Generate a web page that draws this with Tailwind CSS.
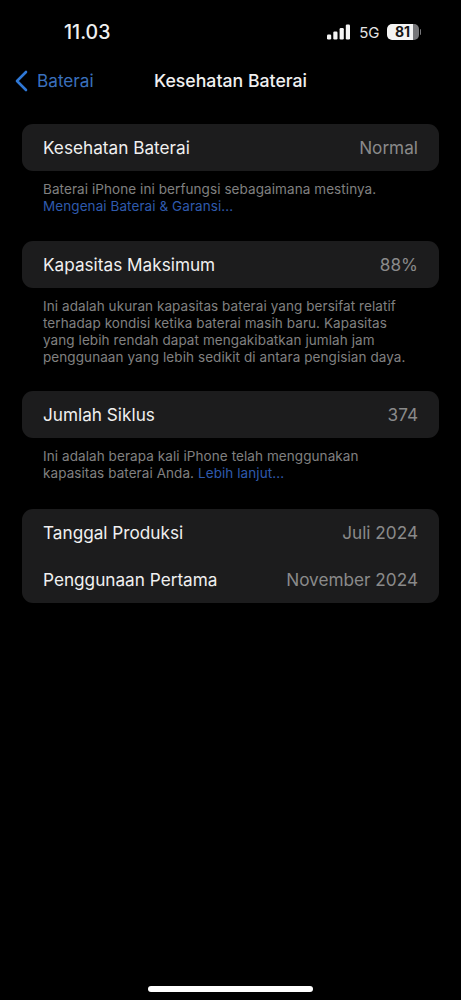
<!DOCTYPE html>
<html lang="id">
<head>
    <meta charset="UTF-8">
    <meta name="viewport" content="width=device-width, initial-scale=1.0">
    <title>Kesehatan Baterai</title>
    <script src="https://cdn.jsdelivr.net/npm/@tailwindcss/browser@4"></script>
</head>
<body class="bg-black">
    <div class="relative h-[1000px] w-[461px] overflow-hidden bg-black font-['Inter','Liberation_Sans',sans-serif] text-[#f0f0f0] antialiased">

        <!-- status bar -->
        <div class="flex h-[63px] items-center pt-[1px]">
            <div class="ml-[64px] pt-[1px] text-[19.5px] font-medium leading-none">11.03</div>
            <div class="ml-auto mr-[40px] flex items-center">
                <svg width="25" height="16" viewBox="0 0 25 16" fill="#f4f4f4">
                    <rect x="1" y="10.5" width="4.2" height="5" rx="1.2"/>
                    <rect x="7.3" y="7.5" width="4.2" height="8" rx="1.2"/>
                    <rect x="13.6" y="4" width="4.2" height="11.5" rx="1.2"/>
                    <rect x="19.8" y="0.5" width="4.2" height="15" rx="1.2"/>
                </svg>
                <span class="ml-[8px] text-[15px] leading-none text-[#e4e4e4]">5G</span>
                <div class="relative ml-[7px] flex h-[16px] w-[32px] overflow-hidden rounded-[5px] bg-[#77777a]">
                    <div class="h-full w-[26px] rounded-l-[5px] bg-[#f4f4f4]"></div>
                    <span class="absolute inset-0 text-center text-[14px] font-bold leading-[16px] text-[#161616]">81</span>
                </div>
                <div class="ml-[1px] h-[6px] w-[1.5px] rounded-r-full bg-[#77777a]"></div>
            </div>
        </div>

        <!-- nav bar -->
        <div class="relative flex h-[36px] items-center">
            <svg class="ml-[14px]" width="14" height="22" viewBox="0 0 14 22" fill="none" stroke="#2f78d6" stroke-width="2.6" stroke-linecap="round" stroke-linejoin="round">
                <path d="M12 2 L3 11 L12 20"/>
            </svg>
            <span class="ml-[9px] text-[17.2px] leading-none text-[#3a70bd]">Baterai</span>
            <span class="absolute inset-x-0 text-center text-[17.7px] font-medium leading-none">Kesehatan Baterai</span>
        </div>

        <main class="px-[22px] pt-[25px]">
            <div class="flex h-[47px] items-center justify-between rounded-[11px] bg-[#1c1c1d] px-[21px] pt-[1px] text-[17.2px]">
                <span>Kesehatan Baterai</span>
                <span class="text-[#8a8a8a]">Normal</span>
            </div>
            <p class="px-[21px] pt-[10px] text-[13.5px] leading-[17px] tracking-[0.08px] text-[#808080]">
                Baterai iPhone ini berfungsi sebagaimana mestinya.<br>
                <span class="text-[#2f5aad]">Mengenai Baterai &amp; Garansi...</span>
            </p>

            <div class="mt-[26px] flex h-[47px] items-center justify-between rounded-[11px] bg-[#1c1c1d] px-[21px] pt-[1px] text-[17.2px]">
                <span>Kapasitas Maksimum</span>
                <span class="text-[#8a8a8a]">88%</span>
            </div>
            <p class="px-[21px] pt-[10px] text-[13.5px] leading-[17px] tracking-[0.08px] text-[#808080]">
                Ini adalah ukuran kapasitas baterai yang bersifat relatif<br>
                terhadap kondisi ketika baterai masih baru. Kapasitas<br>
                yang lebih rendah dapat mengakibatkan jumlah jam<br>
                penggunaan yang lebih sedikit di antara pengisian daya.
            </p>

            <div class="mt-[25px] flex h-[47px] items-center justify-between rounded-[11px] bg-[#1c1c1d] px-[21px] pt-[1px] text-[17.2px]">
                <span>Jumlah Siklus</span>
                <span class="text-[#8a8a8a]">374</span>
            </div>
            <p class="px-[21px] pt-[10px] text-[13.5px] leading-[17px] tracking-[0.08px] text-[#808080]">
                Ini adalah berapa kali iPhone telah menggunakan<br>
                kapasitas baterai Anda. <span class="text-[#2f5aad]">Lebih lanjut...</span>
            </p>

            <div class="mt-[27px] rounded-[11px] bg-[#1c1c1d] px-[21px] text-[17.2px]">
                <div class="flex h-[47px] items-center justify-between pt-[1px]">
                    <span>Tanggal Produksi</span>
                    <span class="text-[#8a8a8a]">Juli 2024</span>
                </div>
                <div class="flex h-[47px] items-center justify-between pt-[1px]">
                    <span>Penggunaan Pertama</span>
                    <span class="text-[#8a8a8a]">November 2024</span>
                </div>
            </div>
        </main>

        <!-- home indicator -->
        <div class="absolute bottom-[8px] left-[148px] h-[6px] w-[165px] rounded-full bg-white"></div>
    </div>
</body>
</html>
